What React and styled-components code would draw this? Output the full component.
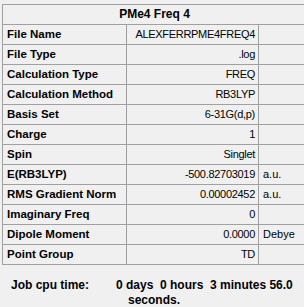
import React from "react";
import styled, { createGlobalStyle } from "styled-components";

const GlobalStyle = createGlobalStyle`
  html, body {
    margin: 0;
    padding: 0;
    background: #f0f0f0;
    overflow: hidden;
  }
  body {
    font-family: "Liberation Sans", Arial, sans-serif;
    font-size: 11px;
    color: #000;
  }
`;

const rows = [
  { label: "File Name", value: "ALEXFERRPME4FREQ4" },
  { label: "File Type", value: ".log" },
  { label: "Calculation Type", value: "FREQ" },
  { label: "Calculation Method", value: "RB3LYP" },
  { label: "Basis Set", value: "6-31G(d,p)" },
  { label: "Charge", value: "1" },
  { label: "Spin", value: "Singlet" },
  { label: "E(RB3LYP)", value: "-500.82703019", unit: "a.u." },
  { label: "RMS Gradient Norm", value: "0.00002452", unit: "a.u." },
  { label: "Imaginary Freq", value: "0" },
  { label: "Dipole Moment", value: "0.0000", unit: "Debye" },
  { label: "Point Group", value: "TD" },
];

function App() {
  return (
    <Page>
      <GlobalStyle />
      <Panel>
        <Title>PMe4 Freq 4</Title>
        <Table>
          <tbody>
            {rows.map((row) => (
              <tr key={row.label}>
                <Label>{row.label}</Label>
                <Value>{row.value}</Value>
                <Unit>{row.unit || ""}</Unit>
              </tr>
            ))}
          </tbody>
        </Table>
      </Panel>
      <CpuTime>
        <CpuLabel>Job cpu time:</CpuLabel>
        <CpuValue>
          <CpuLine>0 days&nbsp;&nbsp;0 hours&nbsp;&nbsp;3 minutes 56.0</CpuLine>
          <CpuLine $indent>seconds.</CpuLine>
        </CpuValue>
      </CpuTime>
    </Page>
  );
}

export default App;

const Page = styled.div`
  padding: 4px 0 0 2px;
  width: 304px;
  height: 307px;
  box-sizing: border-box;
`;

const Panel = styled.div`
  width: 303px;
  border-left: 1px solid #a0a0a0;
  border-top: 1px solid #a0a0a0;
`;

const Title = styled.div`
  height: 19px;
  line-height: 19px;
  text-align: center;
  font-weight: bold;
  font-size: 12px;
  border-bottom: 1px solid #a0a0a0;
`;

const Table = styled.table`
  width: 303px;
  border-collapse: collapse;
  table-layout: fixed;

  td {
    height: 19px;
    padding: 0;
    border-bottom: 1px solid #a0a0a0;
    white-space: nowrap;
    overflow: hidden;
    line-height: 19px;
  }
`;

const Label = styled.td`
  width: 119px;
  padding-left: 4px !important;
  font-weight: bold;
  font-size: 11.5px;
  border-right: 1px solid #a0a0a0;
`;

const Value = styled.td`
  width: 128px;
  padding-right: 3px !important;
  text-align: right;
  letter-spacing: -0.3px;
  border-right: 1px solid #a0a0a0;
`;

const Unit = styled.td`
  padding-left: 4px !important;
`;

const CpuTime = styled.div`
  display: flex;
  margin-top: 13px;
  padding-left: 9px;
  font-weight: bold;
  font-size: 12px;
  line-height: 15px;
`;

const CpuLabel = styled.div`
  width: 105px;
  flex-shrink: 0;
`;

const CpuValue = styled.div`
  display: flex;
  flex-direction: column;
`;

const CpuLine = styled.div`
  white-space: nowrap;
  padding-left: ${(p) => (p.$indent ? "12px" : "0")};
`;
